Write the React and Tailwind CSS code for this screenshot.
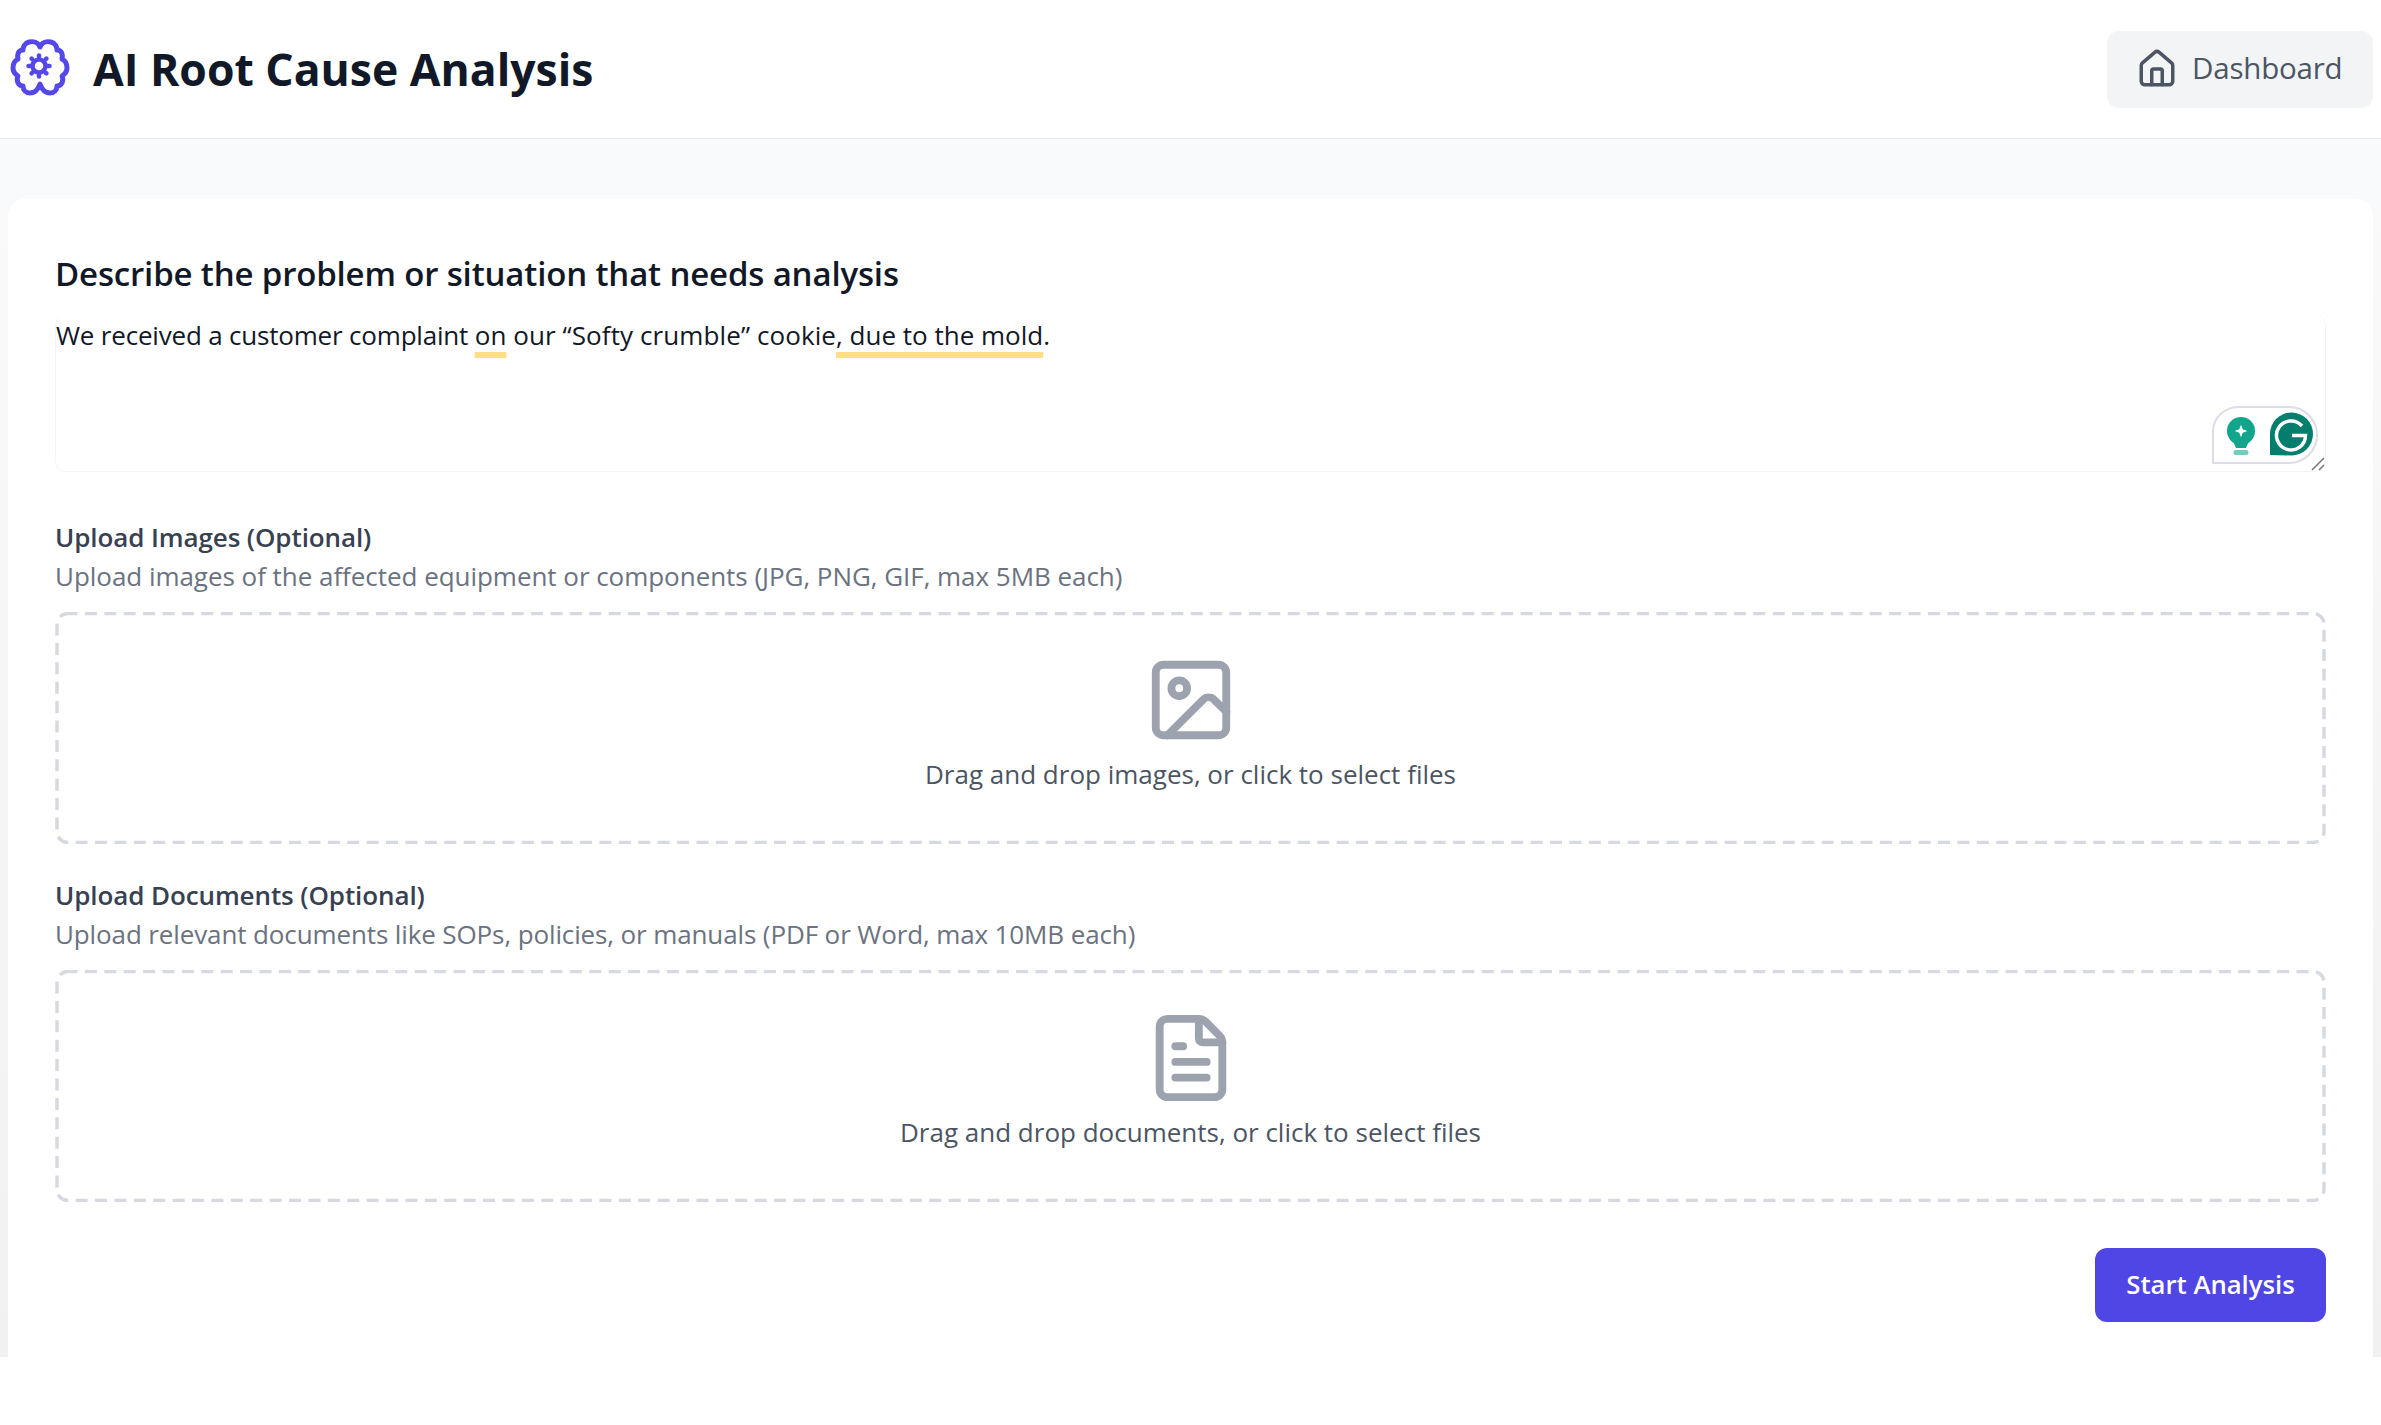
import React from 'react';
import { House, Image, FileText } from 'lucide-react';

const gearTeeth = [0, 45, 90, 135, 180, 225, 270, 315];

const BrainCogIcon = () => (
  <svg viewBox="0 0 80 75" fill="none" stroke="currentColor" strokeWidth="5" strokeLinecap="round" strokeLinejoin="round" className="w-[80px] h-[75px] -mt-[3px] text-[#5548e8]">
    <path d="M40 17C38 12 33 11 29 12C25 13 23 17 23 20C18 20 17 25 18 29C14 31 13 35 13 38C13 42 15 44 18 46C16 50 18 56 23 56C23 60 26 63 30 63C35 63 38 60 40 54C42 60 45 63 50 63C54 63 57 60 57 56C62 56 64 50 62 46C65 44 67 42 67 38C67 35 66 31 62 29C63 25 62 20 57 20C57 17 55 13 51 12C47 11 42 12 40 17Z" />
    <circle cx="39" cy="36" r="6.500" strokeWidth="4.500" />
    {gearTeeth.map((deg) => (
      <path key={deg} d="M39 26.500v-1" strokeWidth="4.500" transform={`rotate(${deg} 39 36)`} />
    ))}
  </svg>
);

// Grammarly widget sitting on the textarea
const GrammarlyBadge = () => (
  <div className="absolute right-[7px] top-[91px] w-[106px] h-[58px] border-2 border-[#dcdde8] rounded-tl-[26px] rounded-tr-[29px] rounded-br-[29px] bg-white">
    <svg viewBox="0 0 102 54" className="w-full h-full">
      <circle cx="27" cy="23" r="14" fill="#12a58c" />
      <path d="M27 14 l2.500 6.500 L36 23 l-6.500 2.500 L27 32 l-2.500-6.500 L18 23 l6.500-2.500z" fill="#fff" transform="translate(8.100 6.900) scale(0.7)" />
      <path d="M19 33h16l-3 7H22z" fill="#12a58c" />
      <path d="M22 42h10a2 2 0 0 1 0 5h-10a2 2 0 0 1 0-5z" fill="#6fcfbd" />
      <path d="M56 47V26a21.500 21.500 0 1 1 21.500 21.500z" fill="#027e6f" />
      <path d="M88 18a14.500 14.500 0 1 0 3.500 9.500H78" fill="none" stroke="#fff" strokeWidth="3.500" />
    </svg>
  </div>
);

const Dropzone = ({ icon: Icon, text }) => (
  <div className="relative mt-[17px] h-[232px] flex flex-col items-center pt-[41px]">
    <svg viewBox="0 0 2270 232" className="absolute inset-0 w-full h-full" fill="none">
      <rect x="1.500" y="1.500" width="2267" height="229" rx="11" stroke="#d6d9df" strokeWidth="3.500" strokeDasharray="12 7.400" strokeDashoffset="2.500" />
    </svg>
    <Icon size={94} className="text-[#9ca3af]" strokeWidth={2} />
    <p className="mt-[7px] text-[26px] leading-[40px] text-[#4b5563]">{text}</p>
  </div>
);

const UploadSection = ({ className, hintClass, title, hint, icon, text }) => (
  <section className={className}>
    <h3 className="text-[26px] leading-[38px] font-semibold tracking-[-0.1px] text-[#374151]">{title}</h3>
    <p className={`mt-[1px] text-[26px] leading-[38px] text-[#6b7280] ${hintClass}`}>{hint}</p>
    <Dropzone icon={icon} text={text} />
  </section>
);

export default function App() {
  return (
    <div className="font-['Open_Sans',sans-serif] min-h-screen bg-white">
      <header className="h-[139px] border-b border-[#e9eaed] flex items-center justify-between pr-[8px] bg-white">
        <div className="flex items-center gap-[13px]">
          <BrainCogIcon />
          <h1 className="text-[44.500px] leading-[60px] font-bold text-[#111827]">AI Root Cause Analysis</h1>
        </div>
        <button className="w-[266px] h-[77px] pl-[29px] rounded-[12px] bg-[#f3f4f6] flex items-center gap-[14px] text-[29.500px] tracking-[-0.2px] leading-[38px] text-[#4b5563]">
          <House size={42} className="text-[#4b5563]" strokeWidth={2} />
          <span className="-mt-[2px]">Dashboard</span>
        </button>
      </header>

      <main className="h-[1218px] bg-linear-to-b from-[#f9fafb] to-[#f0f1f3] px-[8px] pt-[60px]">
        <div className="h-[1158px] bg-white rounded-t-[16px] px-[47px] pt-[54px]">
          <h2 className="text-[33px] leading-[42px] font-semibold tracking-[-0.16px] text-[#111827]">Describe the problem or situation that needs analysis</h2>

          <div className="relative mt-[20px] h-[157px] border-b border-x border-[#f3f4f6] rounded-[10px] text-[26px] leading-[40px] text-[#111827]">
            <span className="tracking-[-0.19px]">We received a customer complaint </span>
            <span className="underline decoration-[#fedd85] decoration-[6px] underline-offset-[7px]">on</span>
            <span className="tracking-[0.1px]"> our “Softy crumble” cookie</span>
            <span className="underline decoration-[#fedd85] decoration-[6px] underline-offset-[7px]">, due to the mold</span>.
            <GrammarlyBadge />
            <svg viewBox="0 0 14 14" className="absolute right-0 bottom-0 w-[14px] h-[14px]" stroke="#777" strokeWidth="1.500">
              <path d="M1 13 13 1M8 13l5-5" />
            </svg>
          </div>

          <UploadSection
            className="mt-[46px]"
            hintClass="tracking-[-0.04px]"
            title="Upload Images (Optional)"
            hint="Upload images of the affected equipment or components (JPG, PNG, GIF, max 5MB each)"
            icon={Image}
            text="Drag and drop images, or click to select files"
          />
          <UploadSection
            className="mt-[32px]"
            hintClass="tracking-[-0.12px]"
            title="Upload Documents (Optional)"
            hint="Upload relevant documents like SOPs, policies, or manuals (PDF or Word, max 10MB each)"
            icon={FileText}
            text="Drag and drop documents, or click to select files"
          />

          <div className="mt-[46px] flex justify-end">
            <button className="w-[231px] h-[74px] rounded-[12px] bg-[#4f46e5] text-white text-[25.700px] leading-[36px] font-semibold">Start Analysis</button>
          </div>
        </div>
      </main>
    </div>
  );
}
